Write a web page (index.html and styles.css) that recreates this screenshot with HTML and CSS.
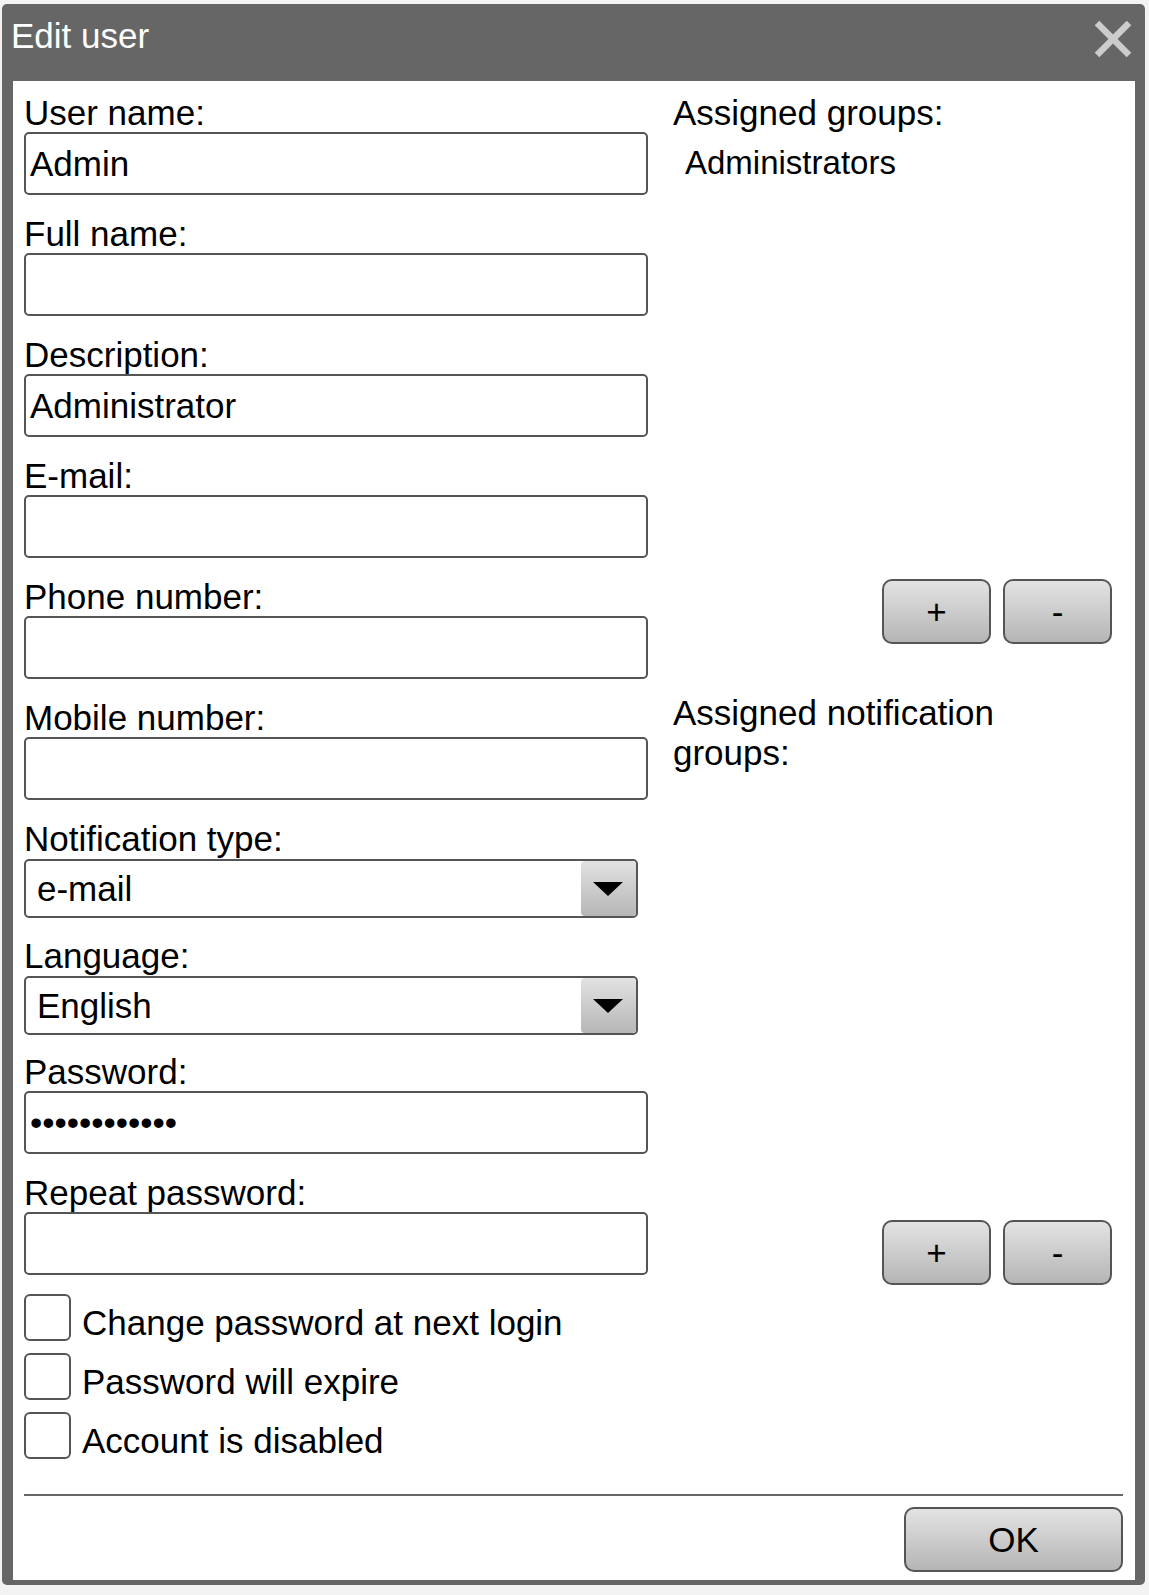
FILE: index.html
```html
<!DOCTYPE html>
<html lang="en">
<head>
<meta charset="utf-8">
<title>Edit user</title>
<link rel="stylesheet" href="styles.css">
</head>
<body>
<div class="dialog">
  <div class="titlebar">
    <span class="title">Edit user</span>
    <svg class="close" width="38" height="38" viewBox="0 0 38 38" aria-label="Close">
      <line x1="3" y1="3" x2="35" y2="35" stroke="#cccccc" stroke-width="6.5"/>
      <line x1="35" y1="3" x2="3" y2="35" stroke="#cccccc" stroke-width="6.5"/>
    </svg>
  </div>
  <div class="content">
    <div class="form">
      <div class="left">
        <div class="field">
          <label class="label">User name:</label>
          <input class="input" type="text" value="Admin">
        </div>
        <div class="field">
          <label class="label">Full name:</label>
          <input class="input" type="text" value="">
        </div>
        <div class="field">
          <label class="label">Description:</label>
          <input class="input" type="text" value="Administrator">
        </div>
        <div class="field">
          <label class="label">E-mail:</label>
          <input class="input" type="text" value="">
        </div>
        <div class="field">
          <label class="label">Phone number:</label>
          <input class="input" type="text" value="">
        </div>
        <div class="field">
          <label class="label">Mobile number:</label>
          <input class="input" type="text" value="">
        </div>
        <div class="field field-select">
          <label class="label">Notification type:</label>
          <div class="select">
            <span class="select-text">e-mail</span>
            <span class="select-arrow"><span class="triangle"></span></span>
          </div>
        </div>
        <div class="field field-tight">
          <label class="label">Language:</label>
          <div class="select">
            <span class="select-text">English</span>
            <span class="select-arrow"><span class="triangle"></span></span>
          </div>
        </div>
        <div class="field">
          <label class="label">Password:</label>
          <input class="input" type="password" value="adminadmin12">
        </div>
        <div class="field field-last">
          <label class="label">Repeat password:</label>
          <input class="input" type="password" value="">
        </div>
        <div class="checks">
          <div class="check"><span class="checkbox"></span><span class="check-label">Change password at next login</span></div>
          <div class="check"><span class="checkbox"></span><span class="check-label">Password will expire</span></div>
          <div class="check"><span class="checkbox"></span><span class="check-label">Account is disabled</span></div>
        </div>
      </div>
      <div class="right">
        <div class="label">Assigned groups:</div>
        <div class="list">
          <div class="list-item">Administrators</div>
        </div>
        <div class="btn-row">
          <button class="btn btn-small">+</button>
          <button class="btn btn-small">-</button>
        </div>
        <div class="label label-second">Assigned notification groups:</div>
        <div class="list"></div>
        <div class="btn-row">
          <button class="btn btn-small">+</button>
          <button class="btn btn-small">-</button>
        </div>
      </div>
    </div>
    <div class="separator"></div>
    <div class="footer">
      <button class="btn btn-ok">OK</button>
    </div>
  </div>
</div>
</body>
</html>
```
FILE: styles.css
```css
html, body {
  margin: 0;
  padding: 0;
}

body {
  background: #f3f3f3;
  font-family: "Liberation Sans", Arial, sans-serif;
  color: #000;
  padding: 4px 0 0 2px;
}

.dialog {
  width: 1143px;
  box-sizing: border-box;
  background: #666666;
  border-radius: 5px;
  padding: 0 10px 5px 11px;
}

.titlebar {
  height: 77px;
  margin: 0 -10px 0 -11px;
  padding: 0 13px 0 9px;
  display: flex;
  justify-content: space-between;
  align-items: flex-start;
}

.title {
  color: #ffffff;
  font-size: 35px;
  line-height: 40px;
  margin-top: 12px;
}

.close {
  display: block;
  margin-top: 16px;
}

.content {
  background: #ffffff;
  padding: 10px 12px 8px 11px;
}

.form {
  display: flex;
  align-items: flex-start;
}

.left {
  width: 624px;
}

.right {
  width: 439px;
  margin-left: 25px;
}

.label {
  display: block;
  font-size: 35px;
  line-height: 39px;
  padding-top: 2px;
}

.field {
  margin-bottom: 17px;
}

.field-select {
  margin-bottom: 16px;
}

.field-tight {
  margin-bottom: 15px;
}

.field-last {
  margin-bottom: 19px;
}

.input {
  display: block;
  width: 624px;
  height: 63px;
  margin: 0;
  box-sizing: border-box;
  border: 2px solid #555555;
  border-radius: 5px;
  padding: 0 4px;
  font-family: "Liberation Sans", Arial, sans-serif;
  font-size: 35px;
  color: #000;
  background: #fff;
  outline: none;
}

.select {
  width: 614px;
  height: 59px;
  margin-top: 1px;
  box-sizing: border-box;
  border: 2px solid #555555;
  border-radius: 5px;
  display: flex;
  align-items: stretch;
  background: #fff;
}

.select-text {
  flex: 1;
  font-size: 35px;
  line-height: 55px;
  padding-left: 11px;
}

.select-arrow {
  width: 55px;
  border-radius: 4px;
  background: linear-gradient(#e2e2e2, #b6b6b6);
  display: flex;
  align-items: center;
  justify-content: center;
}

.triangle {
  width: 0;
  height: 0;
  border-left: 15px solid transparent;
  border-right: 15px solid transparent;
  border-top: 14px solid #000;
  margin-left: -2px;
}

.checks {
  display: flex;
  flex-direction: column;
  gap: 12px;
}

.check {
  display: flex;
  align-items: flex-start;
  height: 47px;
}

.checkbox {
  width: 47px;
  height: 47px;
  box-sizing: border-box;
  border: 2px solid #555555;
  border-radius: 6px;
  background: #fff;
  flex: none;
}

.check-label {
  font-size: 35px;
  line-height: 37px;
  margin: 10px 0 0 11px;
  white-space: nowrap;
}

.list {
  height: 447px;
  box-sizing: border-box;
  padding: 11px 12px;
}

.list-item {
  font-size: 33px;
  line-height: 40px;
}

.btn-row {
  display: flex;
  justify-content: flex-end;
  gap: 12px;
}

.label-second {
  margin-top: 49px;
  line-height: 40px;
  padding-top: 0;
}

.btn {
  box-sizing: border-box;
  border: 2px solid #555555;
  border-radius: 10px;
  background: linear-gradient(#e3e3e3, #b5b5b5);
  font-family: "Liberation Sans", Arial, sans-serif;
  font-size: 35px;
  color: #000;
  padding: 0;
  display: flex;
  align-items: center;
  justify-content: center;
}

.btn-small {
  width: 109px;
  height: 65px;
}

.separator {
  height: 2px;
  background: #666666;
  margin-top: 35px;
}

.footer {
  display: flex;
  justify-content: flex-end;
  margin-top: 11px;
}

.btn-ok {
  width: 219px;
  height: 65px;
}
```
